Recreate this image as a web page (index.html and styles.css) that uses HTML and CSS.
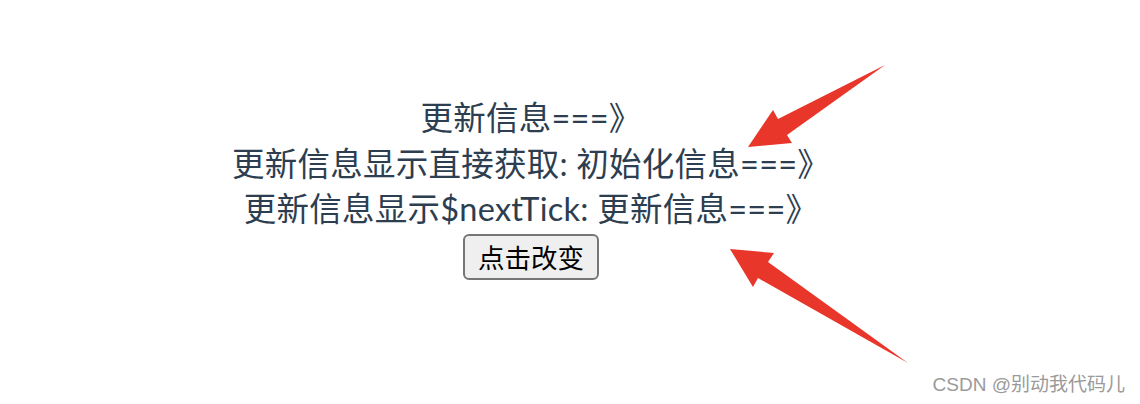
FILE: index.html
```html
<!DOCTYPE html>
<html lang="zh-CN">
  <head>
    <meta charset="UTF-8" />
    <meta name="viewport" content="width=device-width, initial-scale=1.0" />
    <title>nextTick</title>
    <link rel="stylesheet" href="styles.css">
  </head>
  <body>
    <!-- app content -->
    <div id="app">
      <div class="line">更新信息===》</div>
      <div class="line">更新信息显示直接获取: 初始化信息===》</div>
      <div class="line">更新信息显示$nextTick: 更新信息===》</div>
      <div class="actions">
        <button class="btn">点击改变</button>
      </div>
    </div>

    <!-- annotation arrows -->
    <svg class="marks" width="1140" height="404" viewBox="0 0 1140 404">
      <polygon fill="#e9362a" points="748,147 773,110 778,119 885,65 787,135 792,143" />
      <polygon fill="#e9362a" points="730,249 774,253 768,262 908,363 758,278 753,287" />
    </svg>

    <div class="watermark">CSDN @别动我代码儿</div>
  </body>
</html>
```

FILE: styles.css
```css
/* Page */
body {
  margin: 0;
  width: 1140px;
  height: 404px;
  background: #fff;
  position: relative;
  overflow: hidden;
}

#app {
  width: 1062px;
  padding-top: 95px;
  font-family: Lato, "Noto Sans CJK SC", sans-serif;
  font-size: 32.5px;
  letter-spacing: 0.25px;
  line-height: 45.5px;
  color: #2c3e50;
  text-align: center;
}

.actions {
  margin-top: 2px;
  line-height: normal;
  letter-spacing: 0;
}

/* Native-looking button */
.btn {
  font-family: "Noto Sans CJK SC", sans-serif;
  font-size: 26.5px;
  line-height: 38px;
  color: #000;
  padding: 2px 13px;
  background: #efefef;
  border: 2px solid #767676;
  border-radius: 6px;
}

/* Arrows drawn over the content */
.marks {
  position: absolute;
  left: 0;
  top: 0;
}

.watermark {
  position: absolute;
  right: 15px;
  top: 369px;
  font-family: "Liberation Sans", "Noto Sans CJK SC", sans-serif;
  font-size: 19px;
  color: #9a9a9a;
  text-shadow: 0 0 1px rgba(255, 255, 255, 0.8);
}
```
